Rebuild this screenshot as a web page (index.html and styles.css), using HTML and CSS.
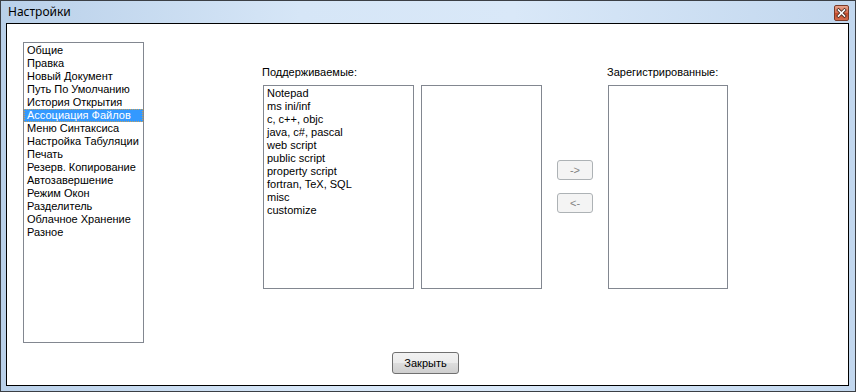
FILE: index.html
```html
<!DOCTYPE html>
<html lang="ru">
<head>
    <meta charset="UTF-8">
    <title>Настройки</title>
    <link rel="stylesheet" href="styles.css">
</head>
<body>
    <div class="window">
        <!-- заголовок окна -->
        <div class="titlebar">
            <span class="title">Настройки</span>
            <button class="close-x" title="Закрыть">
                <svg width="15" height="16" viewBox="0 0 15 16">
                    <path d="M4.5 5 L10.5 11 M10.5 5 L4.5 11" stroke="#4a2a20" stroke-width="3.2" stroke-linecap="square"/>
                    <path d="M4.5 5 L10.5 11 M10.5 5 L4.5 11" stroke="#ffffff" stroke-width="1.6" stroke-linecap="square"/>
                </svg>
            </button>
        </div>

        <div class="client">
            <div class="content">
                <!-- разделы настроек -->
                <ul class="listbox sections">
                    <li>Общие</li>
                    <li>Правка</li>
                    <li>Новый Документ</li>
                    <li>Путь По Умолчанию</li>
                    <li>История Открытия</li>
                    <li class="selected">Ассоциация Файлов</li>
                    <li>Меню Синтаксиса</li>
                    <li>Настройка Табуляции</li>
                    <li>Печать</li>
                    <li>Резерв. Копирование</li>
                    <li>Автозавершение</li>
                    <li>Режим Окон</li>
                    <li>Разделитель</li>
                    <li>Облачное Хранение</li>
                    <li>Разное</li>
                </ul>

                <!-- ассоциация файлов -->
                <div class="assoc">
                    <div class="assoc-col">
                        <div class="caption">Поддерживаемые:</div>
                        <div class="lists">
                            <ul class="listbox lang-list">
                                <li>Notepad</li>
                                <li>ms ini/inf</li>
                                <li>c, c++, objc</li>
                                <li>java, c#, pascal</li>
                                <li>web script</li>
                                <li>public script</li>
                                <li>property script</li>
                                <li>fortran, TeX, SQL</li>
                                <li>misc</li>
                                <li>customize</li>
                            </ul>
                            <ul class="listbox ext-list"></ul>
                        </div>
                    </div>
                    <div class="move-btns">
                        <button class="btn" disabled>-&gt;</button>
                        <button class="btn" disabled>&lt;-</button>
                    </div>
                    <div class="assoc-col">
                        <div class="caption">Зарегистрированные:</div>
                        <ul class="listbox reg-list"></ul>
                    </div>
                </div>
            </div>

            <div class="footer">
                <button class="btn close-btn">Закрыть</button>
            </div>
        </div>
    </div>
</body>
</html>
```

FILE: styles.css
```css
/* окно */
body {
    margin: 0;
    font-family: 'Liberation Sans', Arial, sans-serif;
    font-size: 11px;
    background: #fff;
}

.window {
    width: 856px;
    height: 392px;
    box-sizing: border-box;
    border: 1px solid #3b3f45;
    background: linear-gradient(to right, #b9d0e9, #d6e6f7 35%, #d9e8f8 60%, #c2d7ee);
    padding: 0 6px 5px 5px;
    display: flex;
    flex-direction: column;
}

/* заголовок */
.titlebar {
    height: 22px;
    display: flex;
    align-items: center;
    justify-content: space-between;
}

.title {
    font-family: 'Noto Sans', sans-serif;
    font-size: 12px;
    color: #000;
    padding-left: 2px;
    margin-top: -1px;
}

.close-x {
    width: 15px;
    height: 16px;
    padding: 0;
    margin-top: 2px;
    border: 1px solid #7a3a28;
    border-radius: 2px;
    background: linear-gradient(to bottom, #e9a58e, #d6684b 50%, #c24a2c 51%, #d66b4a);
    display: flex;
    align-items: center;
    justify-content: center;
    box-sizing: border-box;
}

.close-x svg {
    display: block;
    margin: -1px;
}

/* клиентская область */
.client {
    flex: 1;
    background: #fff;
    border: 1px solid #000;
    display: flex;
    flex-direction: column;
}

.content {
    display: flex;
    padding: 18px 0 0 16px;
}

/* списки */
.listbox {
    list-style: none;
    margin: 0;
    padding: 1px 0 0;
    border: 1px solid #828790;
    background: #fff;
    box-sizing: border-box;
}

.listbox li {
    height: 13px;
    line-height: 13px;
    padding-left: 3px;
    white-space: nowrap;
    color: #000;
}

.sections {
    width: 121px;
    height: 301px;
}

.sections li.selected {
    background: #3399ff;
    color: #fff;
    outline: 1px dotted #c6a15a;
    outline-offset: -1px;
}

/* ассоциация */
.assoc {
    display: flex;
    margin-left: 119px;
    padding-top: 24px;
}

.assoc-col {
    display: flex;
    flex-direction: column;
}

.caption {
    height: 13px;
    line-height: 13px;
    margin-bottom: 6px;
    margin-left: -1px;
    color: #000;
}

.lists {
    display: flex;
    gap: 7px;
}

.lang-list {
    width: 151px;
    height: 204px;
}

.ext-list {
    width: 121px;
    height: 204px;
}

.reg-list {
    width: 120px;
    height: 204px;
}

.move-btns {
    display: flex;
    flex-direction: column;
    gap: 13px;
    padding-top: 94px;
    margin: 0 15px;
}

/* кнопки */
.btn {
    font-family: 'Liberation Sans', Arial, sans-serif;
    font-size: 11px;
    border: 1px solid #707070;
    border-radius: 3px;
    background: linear-gradient(to bottom, #f2f2f2, #ebebeb 50%, #dddddd 51%, #cfcfcf);
    color: #000;
    padding: 0;
}

.move-btns .btn {
    width: 36px;
    height: 20px;
}

.btn:disabled {
    border-color: #adb2b5;
    background: #f4f4f4;
    color: #838383;
}

.footer {
    display: flex;
    justify-content: center;
    padding-top: 9px;
    padding-right: 4px;
}

.close-btn {
    width: 67px;
    height: 22px;
}
```
